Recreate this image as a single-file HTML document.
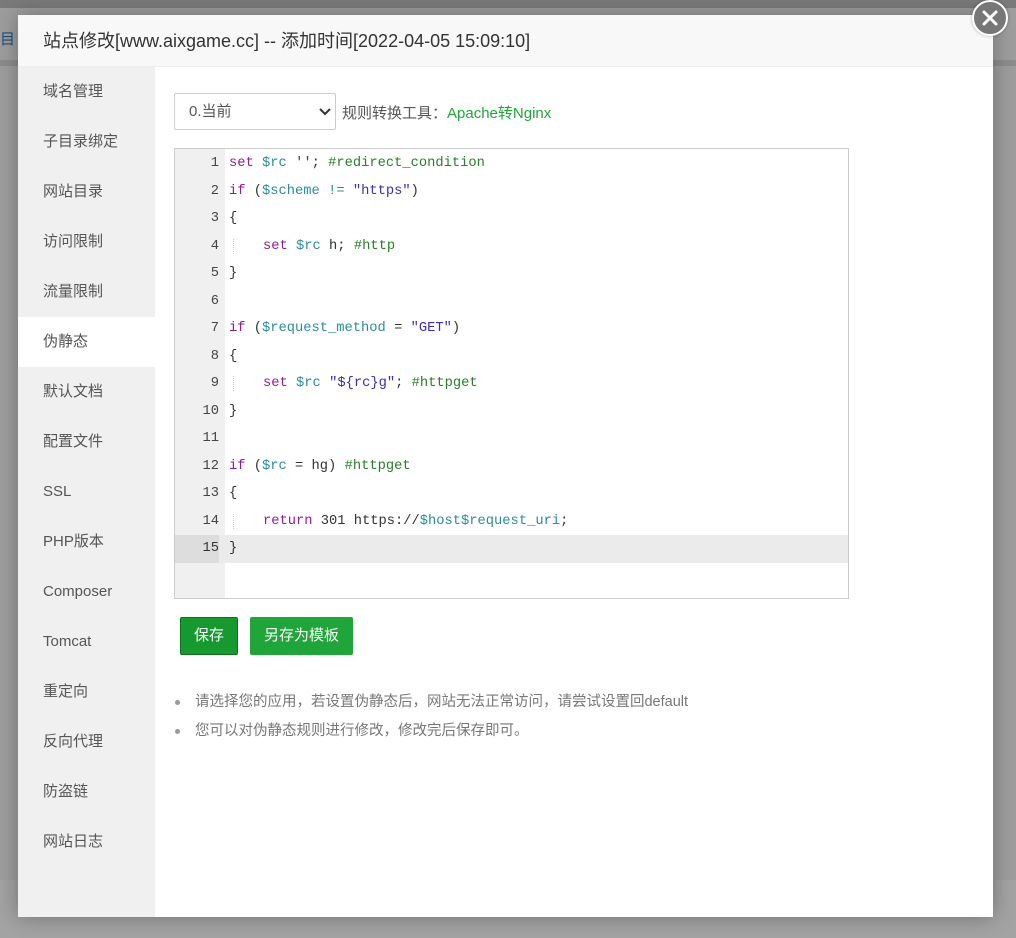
<!DOCTYPE html>
<html><head><meta charset="utf-8"><style>
*{margin:0;padding:0;box-sizing:border-box}
body{width:1016px;height:938px;overflow:hidden;background:#9d9d9d;font-family:"Liberation Sans","Noto Sans CJK SC",sans-serif;position:relative}
.topbar{position:absolute;left:0;top:0;width:1016px;height:8px;background:#7a7a7a}
.bg1{position:absolute;left:0;top:60px;width:1016px;height:6px;background:#8c8c8c}
.bgtext{position:absolute;left:0;top:28px;color:#1d4f7a;font-size:15px}
.bgbot{position:absolute;left:0;top:880px;width:1016px;height:58px;background:#a3a3a3}
.dlg{position:absolute;left:18px;top:15px;width:975px;height:902px;background:#fff;box-shadow:0 0 20px rgba(0,0,0,.3)}
.hd{height:52px;background:#f8f8f8;border-bottom:1px solid #eee;font-size:18px;color:#333;padding-left:25px;line-height:52px}
.side{position:absolute;left:0;top:52px;width:137px;height:850px;background:#f0f0f0}
.side div{height:50px;line-height:50px;padding-left:25px;font-size:15px;color:#555}
.side .on{background:#fff}
.close{position:absolute;left:972px;top:0;width:36px;height:36px;border-radius:50%;background:#777;border:2px solid #fff;box-shadow:0 0 3px rgba(0,0,0,.3)}
.sel{position:absolute;left:174px;top:93px;width:162px;height:37px;border:1px solid #ccc;border-radius:2px;font-size:15px;color:#555;line-height:35px;padding-left:14px;background:#fff}
.lbl{position:absolute;left:342px;top:102px;font-size:15px;color:#555}
.lbl span{color:#20a53a}
.code{position:absolute;left:174px;top:148px;width:675px;height:451px;border:1px solid #ccc;background:#fff;overflow:hidden}
.gut{position:absolute;left:0;top:0;width:50px;height:100%;background:#f0f0f0}
.ln{position:absolute;left:0;width:673px;height:27.5px;font-family:"Liberation Mono","DejaVu Sans Mono",monospace;font-size:13.75px;line-height:27.5px;color:#333;white-space:pre}
.ln .n{display:inline-block;width:44px;text-align:right;color:#444}
.ln .t{position:absolute;left:54px}
.k{color:#8e1e8e}.v{color:#2b8c9c}.c{color:#2a7d2a}.s{color:#3a2fb0}
.act{background:#ebebeb}.act .n{color:#333}
.ind{border-left:1px dotted #ccc;margin-left:4px;padding-left:29px}
.b1{position:absolute;left:180px;top:617px;width:58px;height:38px;background:#169a2f;border:1px solid #0e6e20;border-radius:2px;color:#fff;font-size:15px;text-align:center;line-height:36px}
.b2{position:absolute;left:250px;top:617px;width:103px;height:38px;background:#20a53a;border-radius:2px;color:#fff;font-size:15px;text-align:center;line-height:38px}
ul{position:absolute;left:195px;top:690px;font-size:14.5px;color:#777;list-style:none}
ul li{height:29px;line-height:24px;position:relative}
ul li:before{content:"";position:absolute;left:-20px;top:10px;width:5px;height:5px;border-radius:50%;background:#999}
</style></head><body>
<div class="topbar"></div><div class="bg1"></div><div class="bgtext">目</div><div class="bgbot"></div>
<div class="dlg">
<div class="hd">站点修改[www.aixgame.cc] -- 添加时间[2022-04-05 15:09:10]</div>
<div class="side"><div>域名管理</div><div>子目录绑定</div><div>网站目录</div><div>访问限制</div><div>流量限制</div><div class="on">伪静态</div><div>默认文档</div><div>配置文件</div><div>SSL</div><div>PHP版本</div><div>Composer</div><div>Tomcat</div><div>重定向</div><div>反向代理</div><div>防盗链</div><div>网站日志</div></div>
</div>
<div class="close"><svg width="32" height="32" viewBox="0 0 32 32" style="display:block"><path d="M10 10L22 22M22 10L10 22" stroke="#fff" stroke-width="3" stroke-linecap="round"/></svg></div>
<div class="sel">0.当前<svg style="position:absolute;right:4px;top:13px" width="12" height="9" viewBox="0 0 12 9"><path d="M1 2l5 5 5-5" stroke="#333" stroke-width="2" fill="none"/></svg></div>
<div class="lbl">规则转换工具：<span>Apache转Nginx</span></div>
<div class="code"><div class="gut"></div>
<div class="ln" style="top:1px"><span class="n">1</span><span class="t"><span class="k">set</span> <span class="v">$rc</span> <span class="s">''</span>; <span class="c">#redirect_condition</span></span></div>
<div class="ln" style="top:28.5px"><span class="n">2</span><span class="t"><span class="k">if</span> (<span class="v">$scheme</span> <span class="v">!=</span> <span class="s">"https"</span>)</span></div>
<div class="ln" style="top:56px"><span class="n">3</span><span class="t">{</span></div>
<div class="ln" style="top:83.5px"><span class="n">4</span><span class="t"><span class="ind"><span class="k">set</span> <span class="v">$rc</span> h; <span class="c">#http</span></span></span></div>
<div class="ln" style="top:111px"><span class="n">5</span><span class="t">}</span></div>
<div class="ln" style="top:138.5px"><span class="n">6</span></div>
<div class="ln" style="top:166px"><span class="n">7</span><span class="t"><span class="k">if</span> (<span class="v">$request_method</span> = <span class="s">"GET"</span>)</span></div>
<div class="ln" style="top:193.5px"><span class="n">8</span><span class="t">{</span></div>
<div class="ln" style="top:221px"><span class="n">9</span><span class="t"><span class="ind"><span class="k">set</span> <span class="v">$rc</span> <span class="s">"${rc}g"</span>; <span class="c">#httpget</span></span></span></div>
<div class="ln" style="top:248.5px"><span class="n">10</span><span class="t">}</span></div>
<div class="ln" style="top:276px"><span class="n">11</span></div>
<div class="ln" style="top:303.5px"><span class="n">12</span><span class="t"><span class="k">if</span> (<span class="v">$rc</span> = hg) <span class="c">#httpget</span></span></div>
<div class="ln" style="top:331px"><span class="n">13</span><span class="t">{</span></div>
<div class="ln" style="top:358.5px"><span class="n">14</span><span class="t"><span class="ind"><span class="k">return</span> 301 https://<span class="v">$host$request_uri</span>;</span></span></div>
<div class="ln act" style="top:386px"><span class="n" style="background:#ddd">15</span><span class="t">}</span></div>
</div>
<div class="b1">保存</div><div class="b2">另存为模板</div>
<ul><li>请选择您的应用，若设置伪静态后，网站无法正常访问，请尝试设置回default</li><li>您可以对伪静态规则进行修改，修改完后保存即可。</li></ul>
</body></html>
